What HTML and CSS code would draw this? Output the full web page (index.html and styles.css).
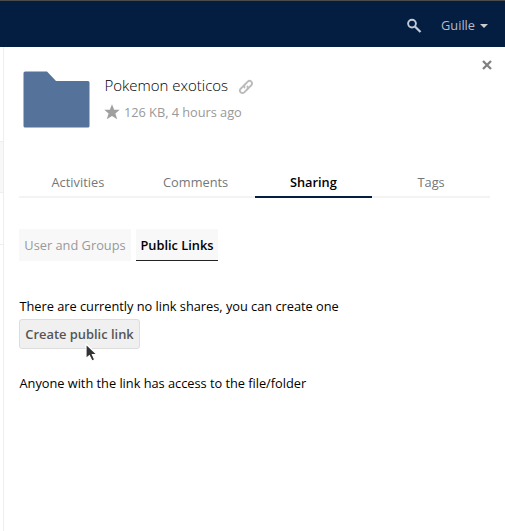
FILE: index.html
```html
<!DOCTYPE html>
<html lang="en">
<head>
<meta charset="utf-8">
<title>Files</title>
<link rel="stylesheet" href="styles.css">
</head>
<body>
<header class="topbar">
  <svg class="search" width="16" height="16" viewBox="0 0 16 16"><circle cx="6" cy="5.600" r="3.900" fill="none" stroke="currentColor" stroke-width="1.900"/><path d="M8.900 8.500L14.500 14" stroke="currentColor" stroke-width="2.300"/></svg>
  <span class="user">Guille</span>
  <svg class="caret" width="8" height="4" viewBox="0 0 8 4"><path d="M0 0h8L4 4z" fill="currentColor"/></svg>
</header>
<div class="content">
  <div class="filelist"><div class="row row-active"></div><div class="row"></div></div>
  <main class="sidebar">
    <svg class="close" width="10" height="10" viewBox="0 0 10 10"><path d="M1 1l8 8M9 1L1 9" stroke="#808080" stroke-width="2.300"/></svg>
    <section class="file">
      <svg class="folder" width="67" height="58" viewBox="0 0 67 58"><path d="M2.200 .5H24L33 10H65Q66.500 10 66.500 11.500V55Q66.500 56.500 65 56.500H2Q.5 56.500 .5 55V2Q.5 .5 2.200 .5z" fill="#55739a"/></svg>
      <div class="info">
        <div class="title"><span class="name">Pokemon exoticos</span>
          <svg class="link" width="16" height="16" viewBox="0 0 16 16"><g fill="none" stroke="#bbb" stroke-width="1.900" transform="rotate(-45 8 8)"><path d="M8.500 5.500H3A2.500 2.500 0 0 0 3 10.500H7A2.500 2.500 0 0 0 9.500 8"/><path d="M7.500 10.500H13A2.500 2.500 0 0 0 13 5.500H9A2.500 2.500 0 0 0 6.500 8"/></g></svg>
        </div>
        <div class="details">
          <svg class="star" width="16" height="16" viewBox="0 0 16 16"><path d="M8 .3L10.200 5.700H15.700L11.400 9.400L13.200 15.200L8 11.900L2.800 15.200L4.600 9.400L.3 5.700H5.800z" fill="#a0a0a0"/></svg>
          <span class="meta">126 KB, 4 hours ago</span>
        </div>
      </div>
    </section>
    <nav class="tabs">
      <span class="tab">Activities</span><span class="tab">Comments</span><span class="tab selected">Sharing</span><span class="tab">Tags</span>
    </nav>
    <div class="subtabs"><span class="subtab">User and Groups</span><span class="subtab chosen">Public Links</span></div>
    <p class="message">There are currently no link shares, you can create one</p>
    <div class="action">
      <button class="create">Create public link</button>
      <svg class="pointer" width="14" height="20" viewBox="0 0 14 20"><path d="M1 1V15.500L4.400 12.600L7 18L9.700 16.700L7.400 11.500H12z" fill="#333" stroke="#fff" stroke-width="1.200"/></svg>
    </div>
    <p class="message note">Anyone with the link has access to the file/folder</p>
  </main>
</div>
</body>
</html>
```
FILE: styles.css
```css
* { box-sizing: border-box; }
body { margin: 0; height: 531px; overflow: hidden; background: #fff; color: #000; font: 12.8px/20px "Open Sans", sans-serif; }
svg { display: block; flex: none; }
.topbar { height: 47px; display: flex; align-items: center; justify-content: flex-end; padding: 3px 17px 0 0; background: #041e42; border-top: 1px solid #4b4b4b; color: #b4bcc8; }
.search { margin: 0 19px 0 0; color: #c4cbd8; }
.user { width: 34px; margin-top: -2px; white-space: nowrap; }
.caret { margin-left: 5px; color: #ccc; }
.content { display: flex; height: 484px; }
.filelist { width: 4px; border-right: 1px solid #eee; padding-top: 94px; }
.row { height: 52px; border-bottom: 1px solid #eee; }
.row-active { background: #f8f8f8; border-top: 1px solid #eee; }
.sidebar { flex: 1; padding: 13px 14px 0 15px; }
.close { margin: 0 -1px 0 auto; }
.file { display: flex; height: 102px; padding: 1px 0 0 4px; }
.info { margin-left: 14px; padding-top: 4px; }
.title { display: flex; align-items: center; height: 20px; font-size: 15px; font-weight: 300; }
.name { width: 124px; padding-left: .4px; white-space: nowrap; }
.link { margin: 3px 0 0 10px; }
.details { display: flex; align-items: center; margin-top: 7px; color: #999; }
.star { margin-right: 4px; }
.meta { letter-spacing: -.04px; }
.tabs { display: flex; width: 471px; height: 26px; border-bottom: 2px solid #f3f3f3; text-align: center; color: #777; }
.tab { flex: 1; height: 26px; }
.selected { border-bottom: 2px solid #041e42; color: #000; font-weight: 600; }
.subtabs { display: flex; gap: 5px; margin-top: 31px; }
.subtab { width: 112px; height: 32px; padding: 6px 0 0; text-align: center; background: #f8f8f8; color: #999; white-space: nowrap; }
.chosen { width: 82px; border-bottom: 1px solid #222; color: #000; font-weight: 600; }
.message { margin: 35px 0 0; padding-left: .5px; letter-spacing: -.02px; white-space: nowrap; }
.action { position: relative; height: 30px; margin-top: 3px; }
.create { display: block; width: 121px; height: 30px; padding: 0; border: 1px solid #ddd; border-radius: 3px; background: #f0f0f0; color: #555; font: 600 12.9px/20px "Open Sans", sans-serif; white-space: nowrap; }
.pointer { position: absolute; left: 66px; top: 24px; }
.note { margin-top: 24px; }
```
